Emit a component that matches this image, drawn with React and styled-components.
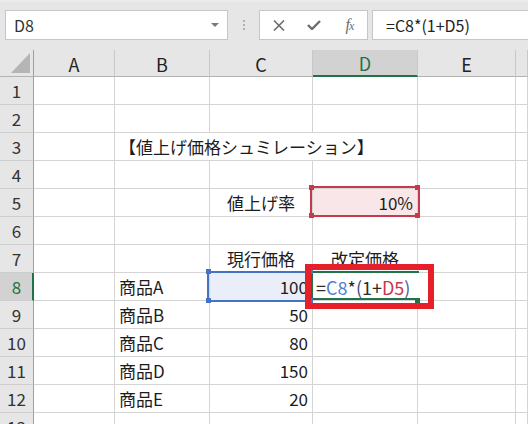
import React from "react";
import styled, { createGlobalStyle } from "styled-components";

const GlobalStyle = createGlobalStyle`
  html, body {
    margin: 0;
    padding: 0;
    background: #ffffff;
  }
  body {
    font-family: "Noto Sans CJK JP", "Noto Sans", sans-serif;
    overflow: hidden;
  }
`;

const GREEN = "#217346";
const BLUE = "#4472c4";
const ROSE = "#c33b4c";

const Window = styled.div`
  width: 528px;
  height: 424px;
  overflow: hidden;
  background: #fff;
`;

/* ---------- formula bar ---------- */

const FormulaBar = styled.div`
  height: 50px;
  box-sizing: border-box;
  padding-left: 5px;
  display: flex;
  align-items: center;
  background: linear-gradient(#eeeeee 0, #e6e6e6 3px);
  overflow: hidden;
`;

const Box = styled.div`
  height: 30px;
  box-sizing: border-box;
  background: #fff;
  border: 1px solid #c6c6c6;
  display: flex;
  align-items: center;
`;

const NameBox = styled(Box)`
  width: 223px;
  flex: none;
  padding: 0 8px;
  justify-content: space-between;
  font-size: 16px;
  color: #333;
`;

const DropArrow = styled.span`
  width: 0;
  height: 0;
  border-left: 4px solid transparent;
  border-right: 4px solid transparent;
  border-top: 4px solid #7a7a7a;
`;

const Grip = styled.div`
  flex: none;
  margin: 0 14px 0 15px;
  display: flex;
  flex-direction: column;
  gap: 2px;

  span {
    width: 2px;
    height: 2px;
    background: #b0b0b0;
  }
`;

const ButtonBox = styled(Box)`
  width: 109px;
  flex: none;
  padding-left: 1px;
`;

const IconSlot = styled.div`
  width: 36px;
  display: flex;
  justify-content: center;
  align-items: center;
  color: #6d6d6d;
`;

const Fx = styled.span`
  font-family: "Liberation Serif", "DejaVu Serif", serif;
  font-style: italic;
  font-size: 16px;
  color: #6d6d6d;
  letter-spacing: -1px;

  small {
    font-size: 12px;
  }
`;

const FormulaInput = styled(Box)`
  flex: none;
  width: 200px;
  margin-left: 4px;
  padding-left: 13px;
  font-size: 16px;
  color: #222;
  white-space: pre;
`;

/* ---------- sheet ---------- */

const Sheet = styled.div`
  position: relative;
  display: grid;
  grid-template-columns: 34px 81px 95px 103px 105px 98px 1fr;
  grid-template-rows: 27px repeat(13, 28px);
`;

const Corner = styled.div`
  background: #e6e6e6;
  border-right: 1px solid #9f9f9f;
  border-bottom: 1px solid #b3b3b3;
  box-sizing: border-box;
  display: flex;
  align-items: flex-end;
  justify-content: flex-end;
  padding: 0 3px 3px 0;
`;

const Triangle = styled.div`
  width: 0;
  height: 0;
  border-left: 19px solid transparent;
  border-bottom: 20px solid #b5b5b5;
`;

const ColHead = styled.div`
  box-sizing: border-box;
  background: ${(p) => (p.$active ? "#d2d2d2" : "#e6e6e6")};
  border-right: 1px solid #c8c8c8;
  border-bottom: ${(p) => (p.$active ? `2px solid ${GREEN}` : "1px solid #b3b3b3")};
  color: ${(p) => (p.$active ? GREEN : "#222")};
  font-size: 18px;
  display: flex;
  align-items: center;
  justify-content: center;
  padding-top: 1px;
`;

const RowHead = styled.div`
  box-sizing: border-box;
  background: ${(p) => (p.$active ? "#d2d2d2" : "#e6e6e6")};
  border-right: ${(p) => (p.$active ? `2px solid ${GREEN}` : "1px solid #9f9f9f")};
  border-bottom: 1px solid #cdcdcd;
  color: ${(p) => (p.$active ? GREEN : "#333")};
  font-size: 17px;
  display: flex;
  align-items: center;
  justify-content: center;
  padding-left: ${(p) => (p.$active ? "1px" : "0")};
`;

const Cell = styled.div`
  box-sizing: border-box;
  border-right: 1px solid #d4d4d4;
  border-bottom: 1px solid #d4d4d4;
  background: ${(p) => p.$fill || "#fff"};
  grid-column: ${(p) => (p.$span ? `span ${p.$span}` : "auto")};
  padding: 0 4px;
  font-size: 17px;
  color: #1c1c1c;
  white-space: nowrap;
  display: flex;
  align-items: center;
  justify-content: ${(p) =>
    p.$align === "right" ? "flex-end" : p.$align === "center" ? "center" : "flex-start"};
`;

/* ---------- overlays ---------- */

const RefBox = styled.div`
  position: absolute;
  left: ${(p) => p.$x}px;
  top: ${(p) => p.$y}px;
  width: ${(p) => p.$w}px;
  height: ${(p) => p.$h}px;
  box-sizing: border-box;
  border: 2px solid ${(p) => p.$color};
  border-right-width: ${(p) => (p.$openRight ? 0 : 2)}px;
  pointer-events: none;
`;

const Handle = styled.div`
  position: absolute;
  left: ${(p) => p.$x}px;
  top: ${(p) => p.$y}px;
  width: 5px;
  height: 5px;
  background: ${(p) => p.$color};
`;

const Editor = styled.div`
  position: absolute;
  left: 311px;
  top: 221px;
  width: 108px;
  height: 29px;
  box-sizing: border-box;
  background: #fff;
  border-left: 2px solid ${GREEN};
  border-top: 2px solid ${GREEN};
  padding-left: 3px;
  font-size: 18px;
  color: #2b2b2b;
  white-space: pre;
  display: flex;
  align-items: center;

  &::after {
    content: "";
    position: absolute;
    left: -2px;
    bottom: 0;
    width: 106px;
    height: 2px;
    background: ${GREEN};
  }
`;

const Tok = styled.span`
  color: ${(p) => p.$color || "#2b2b2b"};
`;

const Callout = styled.div`
  position: absolute;
  left: 305px;
  top: 214px;
  width: 129px;
  height: 45px;
  box-sizing: border-box;
  border: 6px solid #e5202b;
  pointer-events: none;
`;

const columns = ["A", "B", "C", "D", "E", ""];

const rows = {
  3: [null, { text: "【値上げ価格シュミレーション】", span: 3 }, null],
  5: [null, null, { text: "値上げ率", align: "center" }, { text: "10%", align: "right", fill: "#f9e6e8" }],
  7: [null, null, { text: "現行価格", align: "center" }, { text: "改定価格", align: "center" }],
  8: [null, { text: "商品A" }, { text: "100", align: "right", fill: "#e9eef8" }],
  9: [null, { text: "商品B" }, { text: "50", align: "right" }],
  10: [null, { text: "商品C" }, { text: "80", align: "right" }],
  11: [null, { text: "商品D" }, { text: "150", align: "right" }],
  12: [null, { text: "商品E" }, { text: "20", align: "right" }],
};

function SheetRow({ n }) {
  const spec = rows[n] || [];
  const cells = [];
  let col = 0;
  while (col < 6) {
    const c = spec[col];
    if (c) {
      cells.push(
        <Cell key={col} $align={c.align} $fill={c.fill} $span={c.span}>
          {c.text}
        </Cell>
      );
      col += c.span || 1;
    } else {
      cells.push(<Cell key={col} />);
      col += 1;
    }
  }
  return (
    <>
      <RowHead $active={n === 8}>{n}</RowHead>
      {cells}
    </>
  );
}

export default function App() {
  const rowNumbers = Array.from({ length: 13 }, (_, i) => i + 1);

  return (
    <Window>
      <GlobalStyle />
      <FormulaBar>
        <NameBox>
          <span>D8</span>
          <DropArrow />
        </NameBox>
        <Grip>
          <span />
          <span />
          <span />
        </Grip>
        <ButtonBox>
          <IconSlot>
            <svg width="12" height="11" viewBox="0 0 12 11">
              <path d="M1 0.5 L11 10.5 M11 0.5 L1 10.5" stroke="currentColor" strokeWidth="1.6" fill="none" />
            </svg>
          </IconSlot>
          <IconSlot>
            <svg width="14" height="10" viewBox="0 0 14 10">
              <path d="M1 5 L5 9 L13 1" stroke="currentColor" strokeWidth="2.4" fill="none" />
            </svg>
          </IconSlot>
          <IconSlot>
            <Fx>
              f<small>x</small>
            </Fx>
          </IconSlot>
        </ButtonBox>
        <FormulaInput>=C8*(1+D5)</FormulaInput>
      </FormulaBar>

      <Sheet>
        <Corner>
          <Triangle />
        </Corner>
        {columns.map((c) => (
          <ColHead key={c || "F"} $active={c === "D"}>
            {c}
          </ColHead>
        ))}
        {rowNumbers.map((n) => (
          <SheetRow key={n} n={n} />
        ))}

        {/* D5 reference highlight */}
        <RefBox $x={310} $y={136} $w={110} $h={31} $color={ROSE} />
        <Handle $x={309} $y={135} $color={ROSE} />
        <Handle $x={415} $y={135} $color={ROSE} />
        <Handle $x={309} $y={163} $color={ROSE} />
        <Handle $x={415} $y={163} $color={ROSE} />

        {/* C8 reference highlight */}
        <RefBox $x={207} $y={221} $w={104} $h={31} $color={BLUE} $openRight />

        {/* in-cell editor for D8 */}
        <Editor>
          <Tok>=</Tok>
          <Tok $color="#4a7fd8">C8</Tok>
          <Tok>*</Tok>
          <Tok $color="#3d4a7a">(</Tok>
          <Tok>1+</Tok>
          <Tok $color="#c8374d">D5</Tok>
          <Tok $color="#4b5aa0">)</Tok>
        </Editor>
        <Handle $x={415} $y={248} $color={GREEN} />

        <Handle $x={206} $y={219} $color={BLUE} />
        <Handle $x={206} $y={248} $color={BLUE} />
        <Handle $x={308} $y={219} $color={BLUE} />
        <Handle $x={308} $y={248} $color={BLUE} />

        <Callout />
      </Sheet>
    </Window>
  );
}
